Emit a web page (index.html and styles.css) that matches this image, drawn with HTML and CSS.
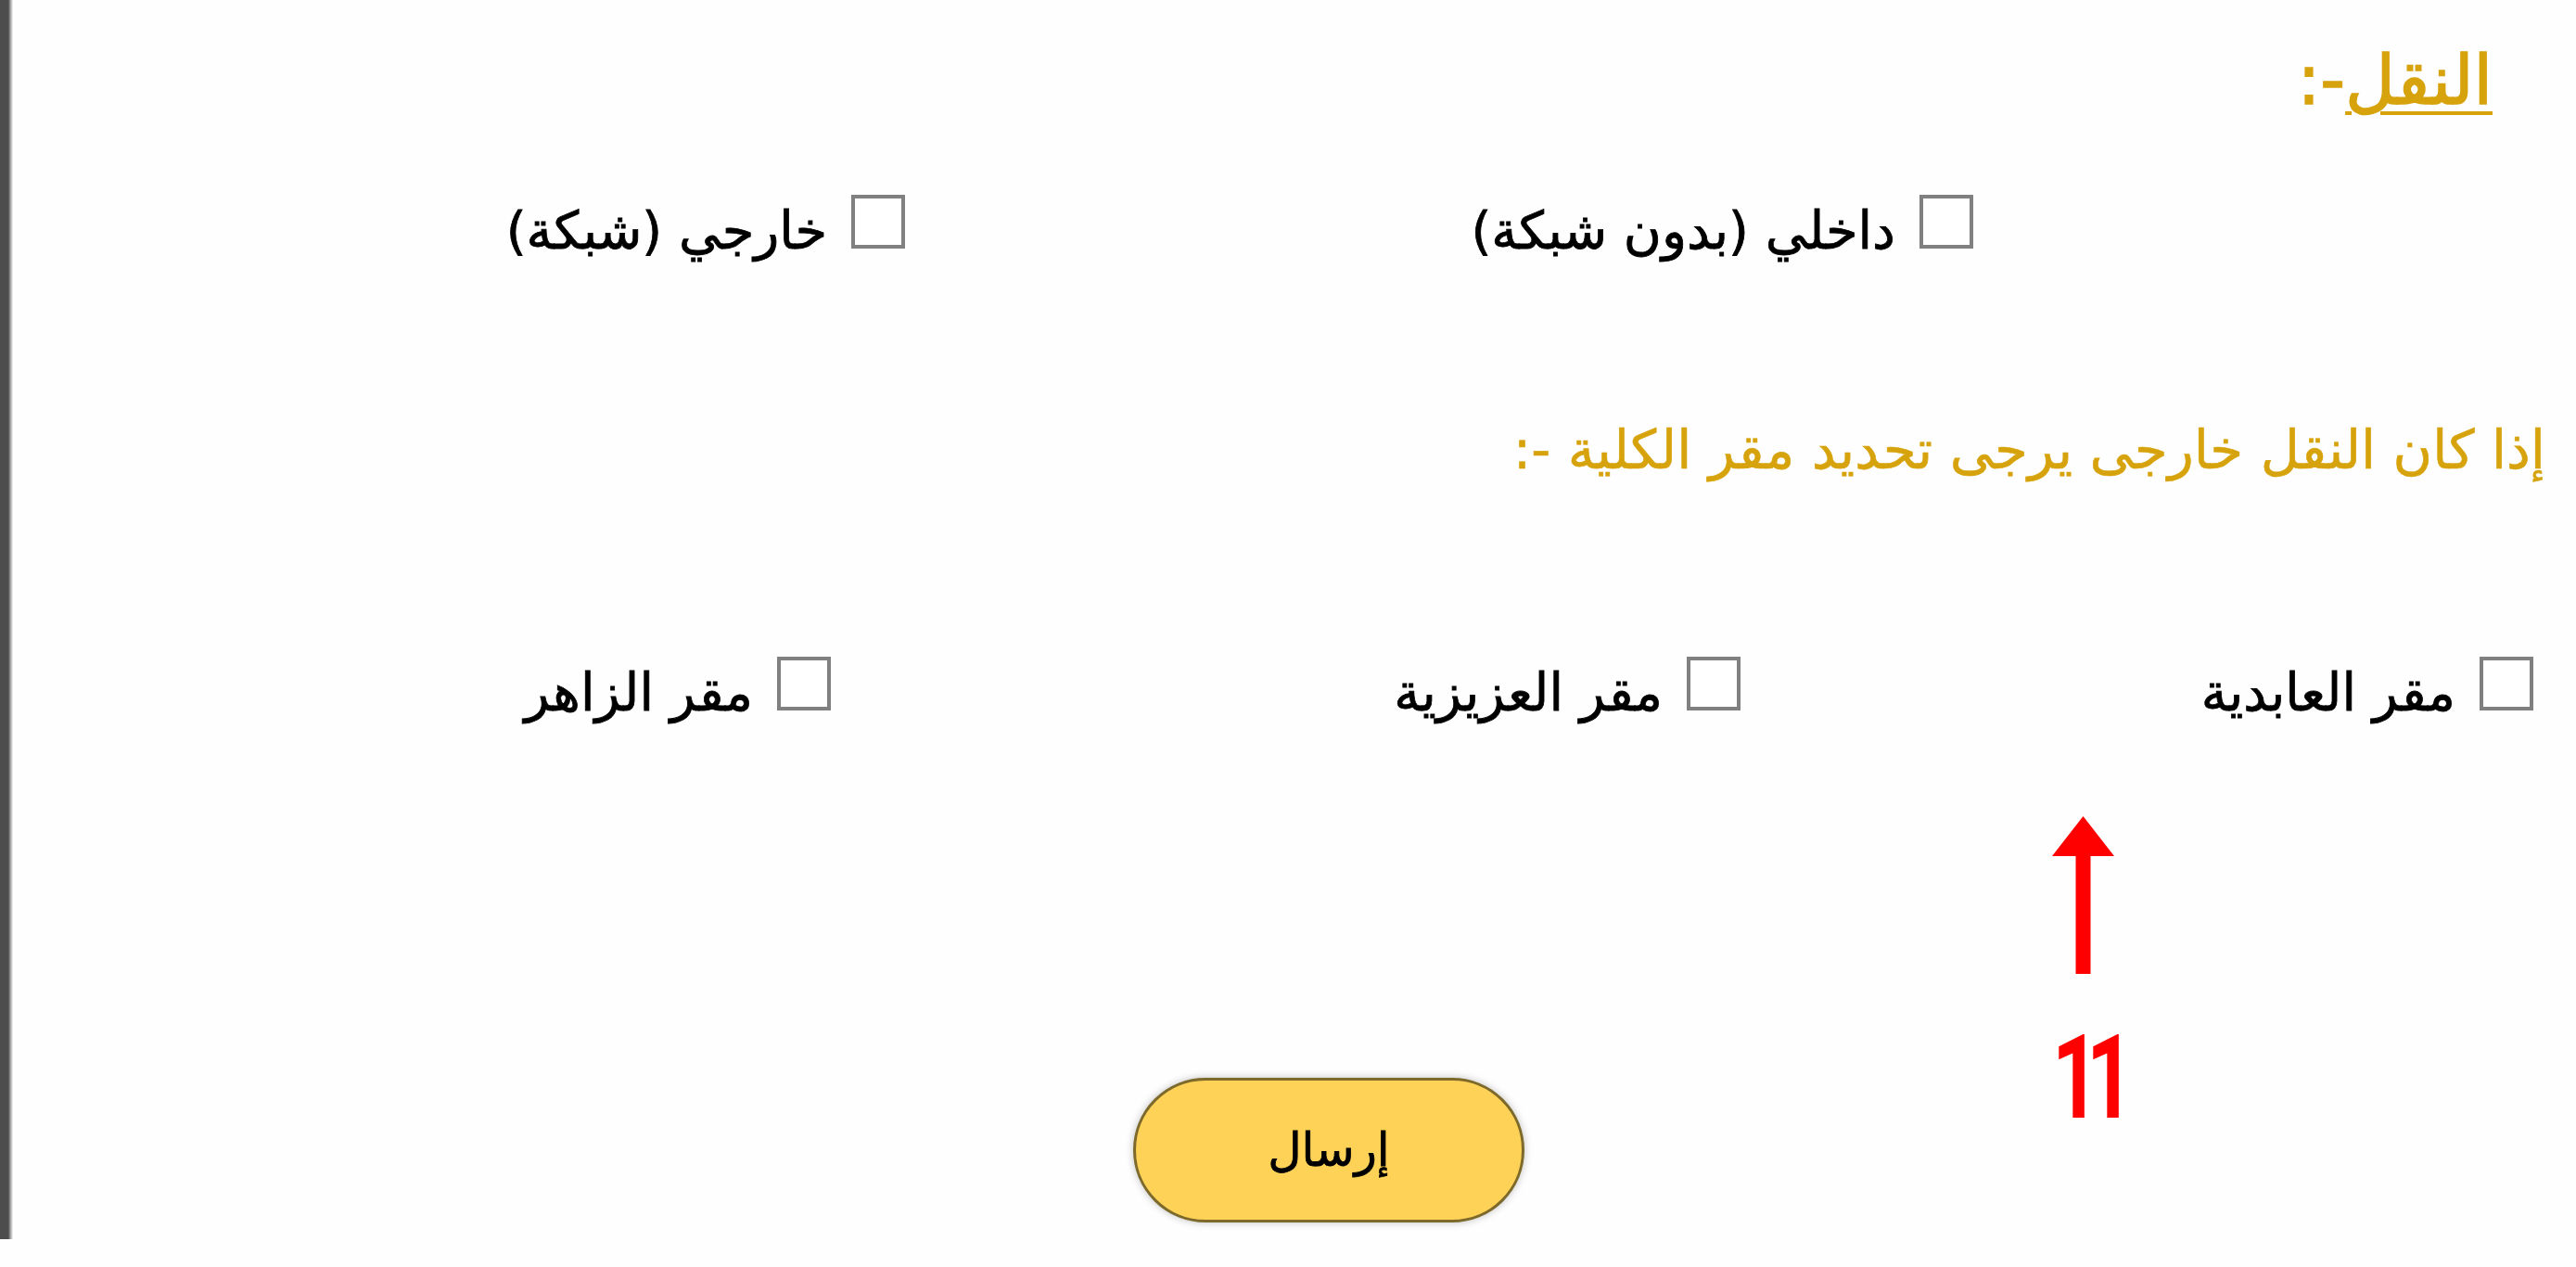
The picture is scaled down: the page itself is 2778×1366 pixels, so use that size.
FILE: index.html
```html
<!DOCTYPE html>
<html lang="ar" dir="rtl">
<head>
<meta charset="utf-8">
<title>النقل</title>
<link rel="stylesheet" href="styles.css">
</head>
<body>
<div class="page">
  <div class="sidebar"></div>
  <main class="frame">
    <h2 class="heading"><span class="u">النقل</span>-:</h2>
    <div class="row row1">
      <label class="opt"><span class="box"></span><span class="lbl">داخلي (بدون شبكة)</span></label>
      <label class="opt"><span class="box"></span><span class="lbl">خارجي (شبكة)</span></label>
    </div>
    <p class="note">إذا كان النقل خارجى يرجى تحديد مقر الكلية -:</p>
    <div class="row row2">
      <label class="opt"><span class="box"></span><span class="lbl">مقر العابدية</span></label>
      <label class="opt"><span class="box"></span><span class="lbl">مقر العزيزية</span></label>
      <label class="opt"><span class="box"></span><span class="lbl">مقر الزاهر</span></label>
    </div>
    <div class="actions"><button class="submit" type="button">إرسال</button></div>
  </main>
  <div class="annot">
    <svg class="arrow" width="67" height="170" viewBox="0 0 67 170"><polygon points="33.5,0 0,43 67,43" fill="#ff0000"/><rect x="25.5" y="42" width="16" height="128" fill="#ff0000"/></svg>
    <div class="num">11</div>
  </div>
</div>
</body>
</html>
```
FILE: styles.css
```css
html, body { margin: 0; padding: 0; }
body { background: #fefefe; font-family: "DejaVu Sans", sans-serif; color: #000; }
.page { position: relative; width: 2778px; height: 1366px; display: flex; direction: ltr; }
.sidebar { width: 14px; height: 1336px; flex: none; background: linear-gradient(to right, #4d4d4d 0, #4d4d4d 9px, #777 10px, #b8b8b8 12px, #fefefe 14px); }
.frame { flex: 1; direction: rtl; }
.heading { margin: 0; padding: 46px 90px 0 0; font-size: 74px; line-height: 80px; font-weight: normal; color: #d7a30d; -webkit-text-stroke: 1.5px #d7a30d; }
.heading .u { text-decoration: underline; text-underline-offset: 8px; text-decoration-thickness: 4px; }
.row { display: flex; align-items: baseline; }
.row1 { margin-top: 84px; padding-right: 650px; }
.row1 .opt:first-child { width: 1152px; }
.row2 { margin-top: 183px; padding-right: 46px; }
.row2 .opt:nth-child(1) { width: 855px; }
.row2 .opt:nth-child(2) { width: 981px; }
.opt { display: flex; align-items: baseline; gap: 26px; font-size: 56px; line-height: 70px; }
.box { width: 50px; height: 50px; border: 4px solid #808080; background: #fff; flex: none; }
.lbl { white-space: nowrap; -webkit-text-stroke: 0.8px #000; }
.note { margin: 161px 33px 0 0; font-size: 58px; line-height: 80px; color: #d7a30d; -webkit-text-stroke: 0.6px #d7a30d; }
.actions { margin-top: 380px; padding-right: 1134px; }
.submit { width: 422px; height: 156px; border-radius: 78px; border: 3px solid #7d6a2a; background: #fdd257; box-shadow: 0 0 8px rgba(0,0,0,0.25); font-family: "DejaVu Sans", sans-serif; font-size: 50px; color: #000; -webkit-text-stroke: 0.8px #000; }
.annot { position: absolute; left: 2213px; top: 880px; width: 67px; }
.arrow { display: block; }
.num { margin-top: 67px; font-family: Roboto, sans-serif; font-weight: 700; font-size: 127px; line-height: 90px; color: #ff0000; letter-spacing: -20px; transform: scaleX(0.7); transform-origin: left top; white-space: nowrap; }
```
